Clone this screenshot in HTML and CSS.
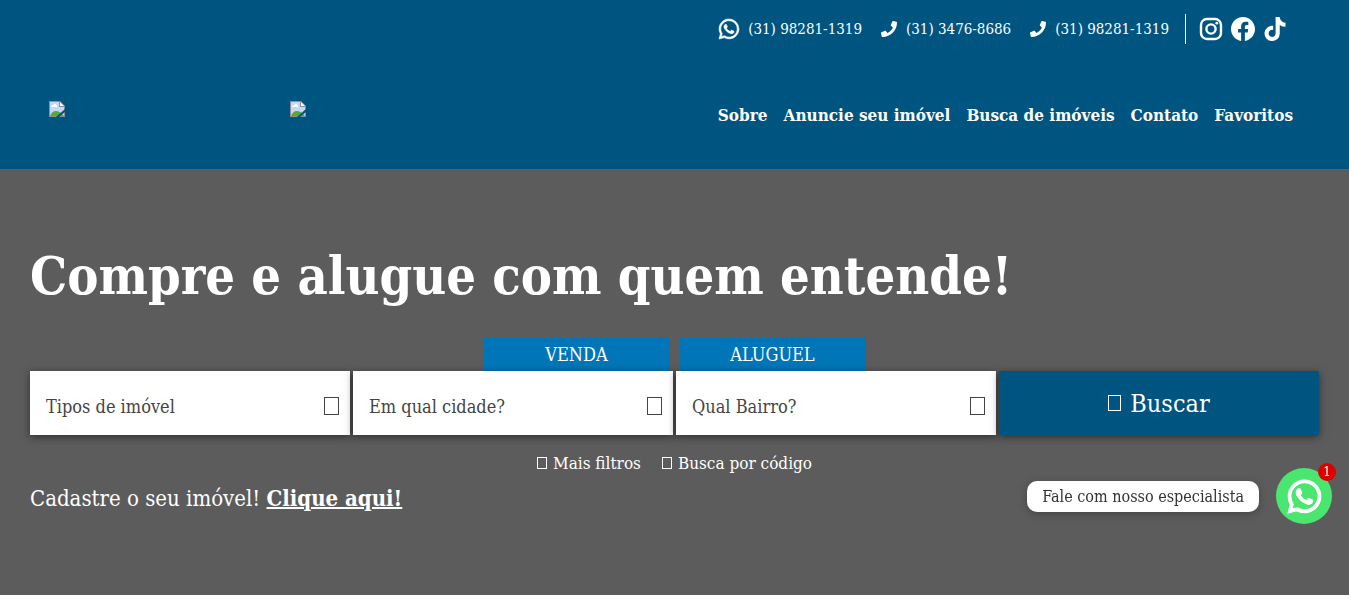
FILE: index.html
```
<!DOCTYPE html>
<html lang="pt-br">
<head>
  <meta charset="UTF-8">
  <meta name="viewport" content="width=device-width, initial-scale=1">
  <title>Imobiliária</title>
  <link rel="stylesheet" href="styles.css">
</head>
<body>
  <!-- shared icons -->
  <svg width="0" height="0" class="sprite" aria-hidden="true">
    <symbol id="whatsapp" viewBox="0 0 16 16" overflow="visible">
      <path stroke="currentColor" stroke-width="0.5" d="M13.601 2.326A7.854 7.854 0 0 0 7.994 0C3.627 0 .068 3.558.064 7.926c0 1.399.366 2.76 1.057 3.965L0 16l4.204-1.102a7.933 7.933 0 0 0 3.79.965h.004c4.368 0 7.926-3.558 7.93-7.93A7.898 7.898 0 0 0 13.6 2.326zM7.994 14.521a6.573 6.573 0 0 1-3.356-.92l-.24-.144-2.494.654.666-2.433-.156-.251a6.56 6.56 0 0 1-1.007-3.505c0-3.626 2.957-6.584 6.591-6.584a6.56 6.56 0 0 1 4.66 1.931 6.557 6.557 0 0 1 1.928 4.66c-.004 3.639-2.961 6.592-6.592 6.592zm3.615-4.934c-.197-.099-1.17-.578-1.353-.646-.182-.065-.315-.099-.445.099-.133.197-.513.646-.627.775-.114.133-.232.148-.43.05-.197-.1-.836-.308-1.592-.985-.59-.525-.985-1.175-1.103-1.372-.114-.198-.011-.304.088-.403.087-.088.197-.232.296-.346.1-.114.133-.198.198-.33.065-.134.034-.248-.015-.347-.05-.099-.445-1.076-.612-1.47-.16-.389-.323-.335-.445-.34-.114-.007-.247-.007-.38-.007a.729.729 0 0 0-.529.247c-.182.198-.691.677-.691 1.654 0 .977.71 1.916.81 2.049.098.133 1.394 2.132 3.383 2.992.47.205.84.326 1.129.418.475.152.904.129 1.246.08.38-.058 1.171-.48 1.338-.943.164-.464.164-.86.114-.943-.049-.084-.182-.133-.378-.232z"/>
    </symbol>
    <symbol id="phone" viewBox="0 0 512 512">
      <path d="M493.4 24.6l-104-24c-11.3-2.6-22.9 3.3-27.5 13.9l-48 112c-4.2 9.8-1.4 21.3 6.9 28l60.6 49.6c-36 76.7-98.9 140.5-177.2 177.2l-49.6-60.6c-6.8-8.3-18.2-11.1-28-6.9l-112 48C3.9 366.5-2 378.1.6 389.4l24 104C27.1 504.2 36.7 512 48 512c256.1 0 464-207.5 464-464 0-11.2-7.7-20.9-18.6-23.4z"/>
    </symbol>
    <symbol id="instagram" viewBox="0 0 24 24">
      <rect x="2" y="2" width="20" height="20" rx="6" fill="none" stroke="currentColor" stroke-width="2.4"/>
      <circle cx="12" cy="12" r="4.6" fill="none" stroke="currentColor" stroke-width="2.4"/>
      <circle cx="17.8" cy="6.2" r="1.4"/>
    </symbol>
    <symbol id="facebook" viewBox="0 0 16 16">
      <path d="M16 8.049c0-4.446-3.582-8.05-8-8.05C3.58 0-.002 3.603-.002 8.05c0 4.017 2.926 7.347 6.75 7.951v-5.625h-2.03V8.05H6.75V6.275c0-2.017 1.195-3.131 3.022-3.131.876 0 1.791.157 1.791.157v1.98h-1.009c-.993 0-1.303.621-1.303 1.258v1.51h2.218l-.354 2.326H9.25V16c3.824-.604 6.75-3.934 6.75-7.951z"/>
    </symbol>
    <symbol id="tiktok" viewBox="0 0 448 512">
      <path d="M448 209.91a210.06 210.06 0 0 1-122.77-39.25V349.38A162.55 162.55 0 1 1 185 188.31V278.2a74.62 74.62 0 1 0 52.23 71.18V0l88 0a121.18 121.18 0 0 0 1.86 22.17h0A122.18 122.18 0 0 0 381 102.39a121.43 121.43 0 0 0 67 20.14Z"/>
    </symbol>
    <symbol id="image" viewBox="0 0 16 16">
      <path d="M0 0h11l5 5v11H0z" fill="#8f8f8f"/>
      <path d="M1 1h9v5h5v9H1z" fill="#c6d7f7"/>
      <path d="M11 1l4 4h-4z" fill="#fff"/>
      <path d="M2 5h1V4h2V3h2v1h1v2H2z" fill="#fff"/>
      <path d="M1 15c1-3 3-5 6-5 2 0 4 1 5 2l3 3z" fill="#52ac31"/>
      <path d="M7 16l9-8v3l-6 5z" fill="#005580"/>
    </symbol>
  </svg>

  <header class="header">
    <div class="topbar">
      <div class="phones">
        <a href="#"><svg class="icon-lg"><use href="#whatsapp"/></svg>(31) 98281-1319</a>
        <a href="#"><svg class="icon-sm"><use href="#phone"/></svg>(31) 3476-8686</a>
        <a href="#"><svg class="icon-sm"><use href="#phone"/></svg>(31) 98281-1319</a>
      </div>
      <div class="social">
        <a href="#" aria-label="Instagram"><svg><use href="#instagram"/></svg></a>
        <a href="#" aria-label="Facebook"><svg><use href="#facebook"/></svg></a>
        <a href="#" aria-label="TikTok"><svg><use href="#tiktok"/></svg></a>
      </div>
    </div>
    <div class="navbar">
      <div class="logos">
        <a href="#" aria-label="Início"><svg><use href="#image"/></svg></a>
        <a href="#" aria-label="Parceiro"><svg><use href="#image"/></svg></a>
      </div>
      <nav class="menu">
        <a href="#">Sobre</a>
        <a href="#">Anuncie seu imóvel</a>
        <a href="#">Busca de imóveis</a>
        <a href="#">Contato</a>
        <a href="#">Favoritos</a>
      </nav>
    </div>
  </header>

  <main class="hero">
    <h1>Compre e alugue com quem entende!</h1>
    <form class="search">
      <div class="tabs">
        <button type="button">VENDA</button>
        <button type="button">ALUGUEL</button>
      </div>
      <div class="fields">
        <div class="field">
          <select aria-label="Tipos de imóvel"><option>Tipos de imóvel</option></select>
          <span class="box"></span>
        </div>
        <div class="field">
          <select aria-label="Em qual cidade?"><option>Em qual cidade?</option></select>
          <span class="box"></span>
        </div>
        <div class="field">
          <select aria-label="Qual Bairro?"><option>Qual Bairro?</option></select>
          <span class="box"></span>
        </div>
        <button type="submit" class="btn-search"><span class="box"></span>Buscar</button>
      </div>
      <div class="more">
        <a href="#"><span class="box"></span>Mais filtros</a>
        <a href="#"><span class="box"></span>Busca por código</a>
      </div>
    </form>
    <p class="register">Cadastre o seu imóvel! <a href="#">Clique aqui!</a></p>
  </main>

  <div class="chat">
    <span class="chat-text">Fale com nosso especialista</span>
    <a href="#" class="chat-btn" aria-label="WhatsApp">
      <svg><use href="#whatsapp"/></svg>
      <span class="chat-badge">1</span>
    </a>
  </div>
</body>
</html>
```
FILE: styles.css
```
* {
  box-sizing: border-box;
}

body {
  margin: 0;
  min-height: 100vh;
  display: flex;
  flex-direction: column;
  font-family: "Roboto Slab", "DejaVu Serif Condensed", "DejaVu Serif", serif;
  font-size: 18px;
  color: #fff;
  background: #5c5c5c;
}

a {
  color: inherit;
  text-decoration: none;
}

svg {
  display: block;
  fill: currentColor;
}

button, select {
  font: inherit;
  border: none;
  border-radius: 0;
  cursor: pointer;
}

.sprite {
  position: absolute;
}

/* header */
.header {
  background: #005580;
  padding: 14px 56px 40px 49px;
}

.topbar {
  display: flex;
  justify-content: flex-end;
  align-items: center;
  padding-right: 6px;
  font-size: 15px;
  font-weight: 200;
}

.phones {
  display: flex;
  gap: 19px;
  padding-right: 16px;
}

.phones a {
  display: flex;
  align-items: center;
  gap: 9px;
  line-height: 30px;
}

.icon-lg {
  width: 20px;
  height: 20px;
  overflow: visible;
}

.icon-sm {
  width: 16px;
  height: 16px;
}

.social {
  display: flex;
  align-items: center;
  gap: 8px;
  height: 30px;
  padding-left: 13px;
  border-left: 1px solid #fff;
}

.social svg {
  width: 24px;
  height: 24px;
}

.navbar {
  display: flex;
  justify-content: space-between;
  padding-top: 57px;
}

.logos {
  display: flex;
  gap: 225px;
}

.logos svg {
  width: 16px;
  height: 16px;
}

.menu {
  display: flex;
  gap: 16px;
  font-size: 17px;
  font-weight: 600;
  line-height: 28px;
}

/* hero */
.hero {
  flex: 1;
  padding: 69px 30px;
}

h1 {
  margin: 0;
  font-size: 52px;
  font-weight: 800;
  line-height: 76px;
  white-space: nowrap;
}

.search {
  padding-top: 24px;
}

.tabs {
  display: flex;
  justify-content: center;
  gap: 10px;
}

.tabs button {
  width: 186px;
  height: 33px;
  padding: 0;
  color: #fff;
  background: #0076b8;
}

.fields {
  display: grid;
  grid-template-columns: repeat(4, 1fr);
  gap: 3px;
}

.field, .btn-search {
  height: 64px;
  box-shadow: 0 2px 8px rgba(0, 0, 0, 0.5);
}

.field {
  display: grid;
  align-items: center;
  background: #fff;
}

.field select, .field .box {
  grid-area: 1 / 1;
}

.field select {
  appearance: none;
  width: 100%;
  height: 100%;
  padding: 6px 40px 0 16px;
  color: #444;
  background: transparent;
}

.box {
  width: 10px;
  height: 12px;
  border: 1px solid currentColor;
}

.field .box {
  justify-self: end;
  width: 15px;
  height: 18px;
  margin: 6px 11px 0 0;
  color: #444;
  pointer-events: none;
}

.btn-search {
  display: flex;
  justify-content: center;
  align-items: center;
  gap: 9px;
  color: #fff;
  background: #005580;
  font-size: 25px;
}

.btn-search .box {
  width: 13px;
  height: 16px;
}

.more {
  display: flex;
  justify-content: center;
  gap: 21px;
  padding-top: 16px;
  font-size: 17px;
  line-height: 24px;
}

.more a {
  display: flex;
  align-items: center;
  gap: 6px;
}

.register {
  margin: 7px 0 0;
  font-size: 22px;
  font-weight: 300;
  line-height: 32px;
}

.register a {
  font-weight: 800;
  text-decoration: underline;
  text-decoration-thickness: 2px;
}

/* whatsapp chat */
.chat {
  position: fixed;
  right: 17px;
  bottom: 71px;
  display: flex;
  align-items: center;
  gap: 17px;
}

.chat-text {
  padding: 0 15px;
  border-radius: 10px;
  color: #333;
  background: #fff;
  font-size: 16px;
  line-height: 31px;
  box-shadow: 0 2px 8px rgba(0, 0, 0, 0.25);
}

.chat-btn {
  position: relative;
  display: grid;
  place-items: center;
  width: 56px;
  height: 56px;
  border-radius: 50%;
  background: #4be670;
}

.chat-btn svg {
  width: 33px;
  height: 33px;
  overflow: visible;
}

.chat-badge {
  position: absolute;
  top: -5px;
  right: -4px;
  width: 18px;
  height: 18px;
  border-radius: 50%;
  background: #d00;
  font-size: 13px;
  line-height: 18px;
  text-align: center;
}
```
